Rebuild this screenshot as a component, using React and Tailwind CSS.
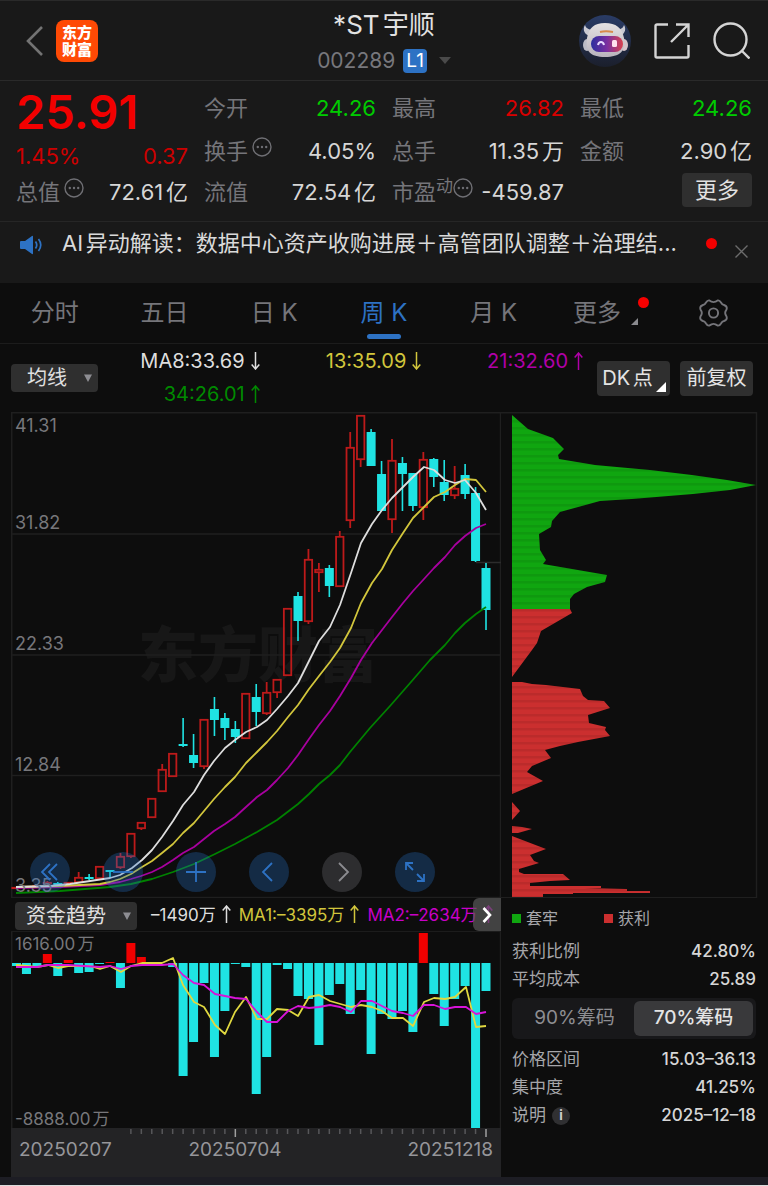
import React from "react";

const CANDLES = [
  // [high, bodyTop, bodyBottom, low, direction]
  [887, 887, 889, 889, "up"], [886, 886, 888, 888, "up"], [885, 885, 887, 887, "up"], [881, 882, 884, 885, "up"],
  [882, 883, 885, 885, "down"], [882, 882, 884, 884, "up"], [872, 877, 883, 883, "up"], [874, 877, 879, 880, "down"],
  [866, 866, 879, 879, "up"], [870, 870, 872, 878, "down"], [853, 856, 868, 869, "up"], [833, 833, 857, 858, "up"],
  [822, 822, 829, 830, "up"], [798, 798, 818, 818, "up"], [764, 769, 792, 792, "up"], [753, 753, 777, 777, "up"],
  [718, 744, 746, 747, "down"], [734, 755, 763, 768, "down"], [719, 719, 767, 769, "up"], [697, 709, 720, 736, "down"],
  [713, 718, 728, 740, "down"], [721, 729, 737, 743, "down"], [693, 693, 739, 739, "up"], [684, 697, 712, 726, "down"],
  [682, 692, 714, 715, "up"], [679, 679, 693, 698, "up"], [608, 608, 676, 676, "up"], [592, 596, 621, 641, "down"],
  [549, 559, 622, 624, "up"], [563, 569, 573, 592, "up"], [565, 568, 586, 597, "down"], [531, 536, 587, 587, "up"],
  [432, 447, 521, 528, "up"], [415, 415, 460, 467, "up"], [429, 432, 466, 466, "down"], [461, 474, 511, 511, "down"],
  [439, 460, 520, 533, "up"], [457, 463, 474, 511, "down"], [473, 473, 506, 511, "down"], [452, 459, 508, 520, "up"],
  [458, 459, 477, 487, "down"], [460, 482, 495, 501, "down"], [466, 488, 496, 499, "up"], [464, 475, 494, 499, "down"],
  [487, 493, 561, 562, "down"], [563, 568, 610, 630, "down"],
];

const MA_LINES = [
  { color: "#008200", points: "16,893 60,891 110,887 131,884 152,879 173,872 194,864 215,854 235,844 257,832 277,820 298,804 309,794 319,784 330,775 340,765 350,752 360,740 370,728 390,706 411,682 430,660 445,645 455,633 465,623 476,614 486,607" },
  { color: "#a8009f", points: "16,888 60,887 100,885 120,882 131,879 141,876 152,872 162,867 173,860 183,853 194,847 204,839 214,831 225,824 235,817 246,807 257,797 267,790 277,780 288,768 298,755 309,739 319,725 330,711 340,696 351,678 361,660 372,643 382,630 392,617 403,603 413,591 424,579 434,568 445,557 455,545 465,536 476,528 486,524" },
  { color: "#d2c63c", points: "16,887 60,886 100,884 110,882 120,879 131,874 142,867 152,861 162,853 173,844 183,833 194,823 204,811 214,799 225,787 235,777 246,763 257,752 267,742 277,731 288,717 298,705 309,689 319,676 330,662 340,648 351,628 361,603 372,583 382,569 392,550 403,533 413,518 424,507 434,497 445,492 455,485 465,479 476,480 486,492" },
  { color: "#dedede", points: "16,887 50,886 70,884 90,881 110,878 120,875 132,868 142,860 152,850 162,837 173,821 183,805 194,792 204,775 214,761 225,748 235,740 246,732 257,727 267,720 277,709 288,696 298,683 309,661 319,641 330,627 340,605 351,573 361,543 372,524 382,510 392,498 403,487 413,477 424,467 434,470 445,480 455,483 465,480 476,493 486,510" },
];

const ZERO = 963;
const FLOWS = [
  966, 974, 966, 954, 976, 960, 973, 972, 964, 962, 988, 943, 957, 963, 963, 967, 1076, 1042, 983, 1057, 1011, 964, 967,
  1094, 1057, 965, 969, 996, 999, 1045, 995, 984, 1014, 990, 1054, 1014, 1019, 1011, 1032, 933, 994, 1026, 999, 986,
  1128, 991,
];

const FLOW_YELLOW =
  "16,965 37,967 48,965 58,968 68,966 90,966 100,969 110,966 121,972 131,966 142,963 162,963 173,958 183,985 194,1002 204,1007 215,1025 225,1034 235,1012 246,997 257,1019 267,1019 277,1009 288,1010 298,1016 309,997 319,995 330,1001 351,1007 361,1005 372,1007 382,1011 392,1018 403,1018 413,1026 424,1002 434,998 445,999 455,997 466,987 476,1027 486,1026";
const FLOW_MAGENTA =
  "16,967 37,967 48,965 68,965 100,967 110,966 121,969 131,966 142,965 162,965 173,964 183,975 194,983 204,985 215,994 225,996 235,998 246,999 257,1012 267,1022 277,1022 288,1011 298,1006 309,1008 319,1007 330,1005 340,1007 351,1012 361,1001 372,1001 382,1006 392,1011 403,1013 413,1016 424,1005 434,1005 445,1009 455,1007 466,1007 476,1014 486,1012";

const CHIPS_GREEN =
  "512,415 528,429 553,438 564,449 558,455 559,459 595,465 650,470 692,475 727,480 756,485 730,490 693,494 632,499 600,501 560,512 552,521 551,527 539,534 540,550 546,560 543,564 607,575 605,582 587,587 574,594 570,599 570,609 512,609";
const CHIPS_RED = [
  "512,609 570,609 572,613 541,631 537,643 532,650 512,677",
  "512,682 522,682 532,684 546,685 563,687 580,689 583,696 588,700 604,701 610,708 588,715 589,723 606,727 605,730 610,736 578,742 560,746 545,750 551,758 532,766 527,772 543,781 512,794",
  "512,802 520,811 512,820",
  "512,826 522,827 532,829 525,831 518,833 512,833",
  "512,836 546,849 530,855 534,861 539,863 519,869 519,872 524,874 563,874 570,880 550,881 530,883 530,886 601,886 601,888 585,888 627,889 627,891 650,891 650,893 573,893 573,894 543,894 543,897 512,897",
];

const slot = (i) => 16 + (470 * i) / 45;

function MoreDots() {
  return (
    <svg className="size-5 shrink-0 text-[#6f6f74]" viewBox="0 0 20 20" fill="none" stroke="currentColor" aria-hidden="true">
      <circle cx="10" cy="10" r="9" strokeWidth="1.4" />
      <g fill="currentColor" stroke="none">
        <circle cx="5.8" cy="10" r="1.2" />
        <circle cx="10" cy="10" r="1.2" />
        <circle cx="14.2" cy="10" r="1.2" />
      </g>
    </svg>
  );
}

function Header() {
  return (
    <header className="grid h-[81px] grid-cols-[1fr_auto_1fr] items-center border-y border-[#2a2a2a] px-[18px]">
      <div className="flex items-center gap-3 pl-[6px]">
        <button type="button" aria-label="返回" className="text-[#737373]">
          <svg className="h-8 w-5" viewBox="0 0 20 32" fill="none" stroke="currentColor" strokeWidth="2.6" aria-hidden="true">
            <path d="M18 2 4 16l14 14" />
          </svg>
        </button>
        <a href="#home" className="grid size-[42px] place-content-center rounded-lg bg-[#ff4a05] text-center text-[15px] leading-[17px] font-black text-white">
          <span>东方</span>
          <span>财富</span>
        </a>
      </div>
      <div className="flex flex-col items-center">
        <h1 className="pt-1 text-[26px] leading-9 text-[#e2e2e2]">*ST宇顺</h1>
        <button type="button" className="flex h-9 items-center gap-2 text-[21px] text-[#77777c]">
          002289
          <span className="rounded bg-[#2d72c4] px-[3px] text-[19px] leading-6 text-white">L1</span>
          <svg className="ml-1 h-[7px] w-3" viewBox="0 0 12 7" fill="#4a4a4a" aria-hidden="true">
            <path d="M0 0h12L6 7z" />
          </svg>
        </button>
      </div>
      <div className="flex items-center justify-end gap-[23px]">
        <button type="button" aria-label="智能助手">
          <svg className="size-[52px]" viewBox="0 0 52 52" aria-hidden="true">
            <defs>
              <linearGradient id="visor" x1="0" x2="1" y1="0" y2="0">
                <stop offset="0" stopColor="#2b2f9e" />
                <stop offset="0.5" stopColor="#7a2fa0" />
                <stop offset="1" stopColor="#d8424f" />
              </linearGradient>
              <linearGradient id="halo" x1="0" x2="0" y1="0" y2="1">
                <stop offset="0" stopColor="#2a3c66" />
                <stop offset="1" stopColor="#1b1f2c" />
              </linearGradient>
              <linearGradient id="shell" x1="0" x2="0" y1="0" y2="1">
                <stop offset="0" stopColor="#e4e1e2" />
                <stop offset="1" stopColor="#b9b4bd" />
              </linearGradient>
            </defs>
            <circle cx="26" cy="26" r="26" fill="url(#halo)" />
            <path d="M6 10c-3 5 0 10 5 11l5-6c-5 0-9-1-10-5zM45 10c3 5 0 10-5 11l-5-6c5 0 9-1 10-5z" fill="#c9c9d2" />
            <ellipse cx="8" cy="30" rx="4" ry="6" fill="#bcbcc6" />
            <ellipse cx="45" cy="30" rx="4" ry="6" fill="#d6c4ca" />
            <path d="M26 8c11 0 17 5 19 15 2 13-4 19-19 19S6 36 8 23C10 13 15 8 26 8z" fill="url(#shell)" />
            <path d="M21 17c4-1 8-1 13 0" stroke="#d88a4a" strokeWidth="2" fill="none" />
            <rect x="12" y="21" width="32" height="16" rx="8" fill="url(#visor)" />
            <path d="M19 30c1-4 5-4 6 0" stroke="#e8dcff" strokeWidth="2" fill="none" />
            <rect x="33" y="25" width="5" height="7" rx="1.5" fill="#ffe0ee" />
          </svg>
        </button>
        <button type="button" aria-label="分享" className="text-[#d4d4d4]">
          <svg className="size-9" viewBox="0 0 36 36" fill="none" stroke="currentColor" strokeWidth="2.4" aria-hidden="true">
            <path d="M14 1.5H3A1.5 1.5 0 0 0 1.5 3v30A1.500 1.500 0 0 0 3 34.500h30a1.500 1.500 0 0 0 1.500-1.500V22M22 1.500h12.500V14M34 2 17 19" />
          </svg>
        </button>
        <button type="button" aria-label="搜索" className="text-[#d4d4d4]">
          <svg className="size-[37px]" viewBox="0 0 37 37" fill="none" stroke="currentColor" strokeWidth="2.4" aria-hidden="true">
            <circle cx="17.5" cy="17.5" r="16" />
            <path d="m28.5 28.5 8 8" />
          </svg>
        </button>
      </div>
    </header>
  );
}

function Stat({ label, value, tone = "text-[#d6d6d6]", row, sup, dots }) {
  return (
    <div className={`flex items-center justify-between ${row}`}>
      <dt className="flex items-center text-[#75757a]">
        {label}
        {sup && <span className="pb-3 text-[17px] leading-5">{sup}</span>}
        {dots && <span className={sup ? "pb-2" : "pb-2 pl-1"}><MoreDots /></span>}
      </dt>
      <dd className={`whitespace-nowrap ${tone}`}>{value}</dd>
    </div>
  );
}

const ROW1 = "h-[42px]";
const ROW2 = "h-[43px]";
const ROW3 = "h-10";

function Quote() {
  return (
    <dl className="grid grid-cols-4 gap-x-4 border-b border-[#262626] px-4 pt-[6px] pb-[9px] text-[22px] leading-7">
      <div>
        <div className="flex h-12 items-center text-[47px] leading-none font-semibold text-[#f20000]">25.91</div>
        <div className="flex h-[42px] items-center justify-between text-[#cc0000]">
          <span>1.45%</span>
          <span>0.37</span>
        </div>
        <Stat label="总值" value="72.61亿" row="h-[30px]" dots />
      </div>
      <div>
        <Stat label="今开" value="24.26" tone="text-[#00cc00]" row={ROW1} />
        <Stat label="换手" value="4.05%" row={ROW2} dots />
        <Stat label="流值" value="72.54亿" row={ROW3} />
      </div>
      <div>
        <Stat label="最高" value="26.82" tone="text-[#d90000]" row={ROW1} />
        <Stat label="总手" value="11.35万" row={ROW2} />
        <Stat label="市盈" value="-459.87" row={ROW3} sup="动" dots />
      </div>
      <div>
        <Stat label="最低" value="24.26" tone="text-[#00cc00]" row={ROW1} />
        <Stat label="金额" value="2.90亿" row={ROW2} />
        <div className="flex h-9 items-center justify-end">
          <button type="button" className="h-[34px] rounded bg-[#2f2f2f] px-[13px] text-[#e2e2e2]">更多</button>
        </div>
      </div>
    </dl>
  );
}

function News() {
  return (
    <div className="flex h-[61px] items-start gap-[18px] px-5 pt-[3px]">
      <svg className="mt-[10px] mr-[2px] h-5 w-[22px] shrink-0 text-[#2d72c4]" viewBox="0 0 22 20" fill="none" stroke="currentColor" aria-hidden="true">
        <path d="M1 6h4l7-5q1-.5 1 .5v17q0 1-1 .5l-7-5H1q-1 0-1-1V7q0-1 1-1z" fill="currentColor" stroke="none" />
        <path d="M15.500 6.500q2.500 3.500 0 7M18.500 4q4.500 6 0 12" strokeWidth="1.7" />
      </svg>
      <a href="#news" className="min-w-0 flex-1 overflow-hidden text-[22px] leading-9 whitespace-nowrap text-[#dadada]">
        AI异动解读：数据中心资产收购进展＋高管团队调整＋治理结...
      </a>
      <span className="mt-[13px] size-[11px] shrink-0 rounded-full bg-[#f20000]" />
      <button type="button" aria-label="关闭" className="mt-5 text-[#6c6c6c]">
        <svg className="size-[13px]" viewBox="0 0 13 13" stroke="currentColor" strokeWidth="1.4" aria-hidden="true">
          <path d="m0.5 0.5 12 12M12.5 0.5l-12 12" />
        </svg>
      </button>
    </div>
  );
}

function Tabs() {
  const tabs = ["分时", "五日", "日 K", "周 K", "月 K"];
  return (
    <nav className="grid h-[61px] grid-cols-7 border-b border-[#1c1c1c] bg-[#0d0d0d] text-2xl text-[#75757a]">
      {tabs.map((t) => (
        <button key={t} type="button" className={t === "周 K" ? "relative text-[#2d72c4]" : "relative"}>
          {t}
          {t === "周 K" && <span className="absolute bottom-1 left-1/2 h-[5px] w-[34px] -translate-x-1/2 rounded-full bg-[#2d72c4]" />}
        </button>
      ))}
      <button type="button" className="flex items-center justify-center gap-[10px] pl-1">
        更多
        <span className="relative">
          <svg className="mt-4 size-[7px]" viewBox="0 0 7 7" fill="#8a8a8e" aria-hidden="true">
            <path d="M7 0v7H0z" />
          </svg>
          <span className="absolute -top-[5px] left-[7px] size-[11px] rounded-full bg-[#f60000]" />
        </span>
      </button>
      <button type="button" aria-label="设置" className="grid place-content-center">
        <svg className="h-7 w-[29px]" viewBox="0 0 29 28" fill="none" stroke="currentColor" strokeWidth="1.9" strokeLinejoin="round" aria-hidden="true">
          <path d="M10.500 1.500Q8.500 1 7 3.500 5.800 5.800 4 6 1.200 7 1.200 9q0 1.500 1 2.800 1.200 2.200 0 4.400-1 1.300-1 2.800 0 2 2.800 3 1.800.2 3 2.500 1.500 2.500 3.500 2 1.200-.8 2-1.200 2-.8 4 0 .8.4 2 1.200 2 .5 3.500-2 1.200-2.300 3-2.500 2.800-1 2.800-3 0-1.500-1-2.800-1.200-2.200 0-4.400 1-1.300 1-2.800 0-2-2.800-3-1.800-.2-3-2.500Q20.500 1 18.500 1.500l-2 1.200q-2 .8-4 0z" />
          <circle cx="14.5" cy="14" r="4.6" />
        </svg>
      </button>
    </nav>
  );
}

function Caret() {
  return (
    <svg className="size-2" viewBox="0 0 8 8" fill="#8d8d92" aria-hidden="true">
      <path d="M0 .5h8L4 8z" />
    </svg>
  );
}

function Arrow({ down }) {
  return (
    <svg className="ml-[6px] inline-block h-[18px] w-[9px] align-[-2px]" viewBox="0 0 9 18" fill="none" stroke="currentColor" strokeWidth="1.5" aria-hidden="true">
      {down ? <path d="M4.500 0v17M.7 12.500l3.800 4.500 3.800-4.500" /> : <path d="M4.500 18V1M.7 5.500 4.500 1l3.800 4.500" />}
    </svg>
  );
}

function Averages() {
  return (
    <div className="flex h-[68px] items-center pr-[15px] pl-[11px]">
      <button type="button" className="flex h-7 w-[87px] shrink-0 items-center justify-between rounded bg-[#2f2f2f] pr-[6px] pl-4 text-xl text-[#e0e0e0]">
        均线 <Caret />
      </button>
      <div className="grid flex-1 grid-cols-3 text-right text-[20px] leading-[33px] whitespace-nowrap">
        <span className="text-[#dedede]">MA8:33.69<Arrow down /></span>
        <span className="text-[#d2c63c]">13:35.09<Arrow down /></span>
        <span className="text-[#b000a8]">21:32.60<Arrow /></span>
        <span className="text-[#008a00]">34:26.01<Arrow /></span>
      </div>
      <div className="flex shrink-0 gap-[10px] pl-[14px] text-xl text-[#e4e4e4]">
        <button type="button" className="relative h-[35px] w-[73px] rounded bg-[#2f2f2f] pr-3">
          DK点
          <svg className="absolute right-1 bottom-1 size-[10px]" viewBox="0 0 10 10" fill="#fff" aria-hidden="true">
            <path d="M10 0v10H0z" />
          </svg>
        </button>
        <button type="button" className="h-[35px] w-[73px] rounded bg-[#2f2f2f]">前复权</button>
      </div>
    </div>
  );
}

const CONTROLS = [
  { label: "最早", d: "M20 12 12 20l8 8M27 12l-8 8 8 8" },
  { label: "缩小", d: "M10 20h20" },
  { label: "放大", d: "M10 20h20M20 10v20" },
  { label: "向左", d: "M23 11l-9 9 9 9" },
  { label: "向右", d: "M17 11l9 9-9 9", off: true },
  { label: "全屏", d: "M11 18v-7h7M11 11l7 7M22 29h7v-7M29 29l-7-7" },
];

function PriceChart() {
  return (
    <div className="relative">
      <svg className="block w-full" viewBox="11 412 490 486" role="img" aria-label="周K线图">
        <text x="138" y="677" fontSize="60" fontWeight="900" fill="#171717">东方财富</text>
        <g stroke="#1f1f1f" strokeWidth="1.5" fill="none">
          <path d="M11 412.700h490M11 534h490M11 655h490M11 775.500h490M11 897.500h490M11.700 412v486M500.500 412v486" />
          <path d="M476 562.500h25" stroke="#2c2c2c" />
        </g>
        {CANDLES.map(([high, top, bottom, low, dir], i) => {
          const x = slot(i);
          if (dir === "down") {
            return (
              <g key={i} fill="#1fe3e3">
                <rect x={x - 0.8} y={high} width="1.6" height={low - high} />
                <rect x={x - 4.5} y={top} width="9" height={bottom - top} />
              </g>
            );
          }
          return (
            <g key={i} fill="none" stroke="#bd1a1a" strokeWidth="1.8">
              <path d={`M${x} ${high}V${top}M${x} ${bottom}V${low}`} />
              <rect x={x - 3.7} y={top + 0.8} width="7.4" height={Math.max(bottom - top - 1.6, 0.4)} />
            </g>
          );
        })}
        {MA_LINES.map((l) => (
          <polyline key={l.color} points={l.points} stroke={l.color} strokeWidth="1.8" fill="none" strokeLinejoin="round" />
        ))}
        <g fontSize="18" fill="#77777b">
          <text x="15" y="432">41.31</text>
          <text x="15" y="529">31.82</text>
          <text x="15" y="650">22.33</text>
          <text x="15" y="771">12.84</text>
          <text x="15" y="892">3.35</text>
        </g>
      </svg>
      <div className="absolute bottom-[6px] left-[19px] flex gap-[33px]">
        {CONTROLS.map((c) => (
          <button
            key={c.label}
            type="button"
            aria-label={c.label}
            className={c.off ? "size-10 rounded-full bg-[#2d2d2f] text-[#8c8c90]" : "size-10 rounded-full bg-[#2470c8]/30 text-[#2d72c4]"}
          >
            <svg viewBox="0 0 40 40" fill="none" stroke="currentColor" strokeWidth="1.8" aria-hidden="true">
              <path d={c.d} />
            </svg>
          </button>
        ))}
      </div>
    </div>
  );
}

function FlowChart() {
  return (
    <section>
      <div className="relative flex h-[34px] items-center gap-2 overflow-hidden border-b border-[#1c1c1c] pt-[2px] pl-1 text-[17px] whitespace-nowrap [text-autospace:no-autospace]">
        <button type="button" className="mr-[6px] flex h-7 w-[122px] shrink-0 items-center justify-between rounded bg-[#2f2f2f] pr-[6px] pl-[11px] text-xl text-[#e0e0e0]">
          资金趋势 <Caret />
        </button>
        <span className="text-[#dedede]">–1490万<Arrow /></span>
        <span className="text-[#d2c63c]">MA1:–3395万<Arrow /></span>
        <span className="text-[#c800c8]">MA2:–2634万<Arrow /></span>
        <button type="button" aria-label="更多指标" className="absolute inset-y-0 right-0 w-7 rounded-l-md bg-[#5a5a5a]/70 text-white">
          <svg className="mx-auto h-4 w-[10px]" viewBox="0 0 10 16" fill="none" stroke="currentColor" strokeWidth="2.6" aria-hidden="true">
            <path d="m1.500 1 6.500 7-6.500 7" />
          </svg>
        </button>
      </div>
      <svg className="block w-full" viewBox="11 932 490 196" role="img" aria-label="资金趋势图">
        <path d="M11.700 932v196M500.500 932v196" stroke="#1f1f1f" strokeWidth="1.5" />
        {FLOWS.map((v, i) => (
          <rect key={i} x={Math.max(slot(i) - 4.5, 12)} y={Math.min(v, ZERO)} width="9" height={Math.abs(v - ZERO)} fill={v < ZERO ? "#f00000" : "#1fe3e3"} />
        ))}
        <polyline points={FLOW_YELLOW} stroke="#e0d840" strokeWidth="1.8" fill="none" strokeLinejoin="round" />
        <polyline points={FLOW_MAGENTA} stroke="#d814d8" strokeWidth="1.8" fill="none" strokeLinejoin="round" />
        <g fontSize="17" fill="#77777b">
          <text x="15" y="950">1616.00万</text>
          <text x="15" y="1125">-8888.00万</text>
        </g>
      </svg>
      <div className="h-[49px] bg-[#232325]">
        <svg className="block w-full" viewBox="11 1128 490 10" aria-hidden="true">
          {FLOWS.map((_, i) =>
            i < 11 ? null : (
              <path key={i} d={`M${slot(i)} 1129v${i === 21 || i === 45 ? 8 : 5}`} stroke={i === 21 || i === 45 ? "#a0a0a0" : "#57575a"} strokeWidth="1.5" />
            )
          )}
        </svg>
        <div className="grid grid-cols-[130fr_188fr_172fr] text-[19px] leading-6 text-[#96969a]">
          <span className="pl-2">20250207</span>
          <span className="text-center">20250704</span>
          <span className="pr-2 text-right">20251218</span>
        </div>
      </div>
    </section>
  );
}

function Row({ label, value, info }) {
  return (
    <div className="flex h-7 items-center justify-between">
      <dt className="flex items-center gap-[6px] text-[#a6a6aa]">
        {label}
        {info && (
          <button type="button" aria-label="查看说明" className="grid size-[18px] place-content-center rounded-full bg-[#303032] text-[13px] font-bold text-[#d0d0d0]">
            i
          </button>
        )}
      </dt>
      <dd className="font-medium text-[#d6d6d6]">{value}</dd>
    </div>
  );
}

function Chips() {
  return (
    <aside>
      <svg className="block w-full" viewBox="501 412 267 486" role="img" aria-label="筹码分布">
        <defs>
          <pattern id="bands" width="8" height="7" patternUnits="userSpaceOnUse">
            <rect width="8" height="2.5" fill="#000" opacity="0.08" />
          </pattern>
        </defs>
        <path d="M501 412.700h255.500v485H501" stroke="#1f1f1f" strokeWidth="1.5" fill="none" />
        <polygon points={CHIPS_GREEN} fill="#10a610" />
        <polygon points={CHIPS_GREEN} fill="url(#bands)" />
        {CHIPS_RED.map((p) => (
          <g key={p}>
            <polygon points={p} fill="#cb2f2f" />
            <polygon points={p} fill="url(#bands)" />
          </g>
        ))}
      </svg>
      <div className="pr-3 pl-[11px] text-[17px]">
        <div className="flex h-10 items-center gap-[46px] text-base text-[#a6a6aa]">
          <span className="flex items-center gap-[5px]"><i className="size-[9px] bg-[#10a610]" />套牢</span>
          <span className="flex items-center gap-[5px]"><i className="size-[9px] bg-[#cb2f2f]" />获利</span>
        </div>
        <dl>
          <Row label="获利比例" value="42.80%" />
          <Row label="平均成本" value="25.89" />
        </dl>
        <div className="mt-1 mb-[7px] grid h-[41px] grid-cols-2 rounded-md bg-[#18181a] p-[3px] text-[19px]">
          <button type="button" className="text-[#8e8e92]">90%筹码</button>
          <button type="button" className="rounded-md bg-[#39393b] font-medium text-[#e4e4e4]">70%筹码</button>
        </div>
        <dl>
          <Row label="价格区间" value="15.03–36.13" />
          <Row label="集中度" value="41.25%" />
          <Row label="说明" value="2025–12–18" info />
        </dl>
      </div>
    </aside>
  );
}

export default function App() {
  return (
    <main className="bg-[#191919] font-[Inter,'Noto_Sans_CJK_SC',sans-serif] [text-autospace:normal]">
      <Header />
      <Quote />
      <News />
      <div className="bg-[#0d0d0d]">
        <Tabs />
        <Averages />
        <div className="grid grid-cols-[490fr_267fr] pl-[11px]">
          <div>
            <PriceChart />
            <FlowChart />
          </div>
          <Chips />
        </div>
      </div>
      <div className="h-[9px] border-b border-[#dcdcdc] bg-[#1d1d24]" />
    </main>
  );
}
